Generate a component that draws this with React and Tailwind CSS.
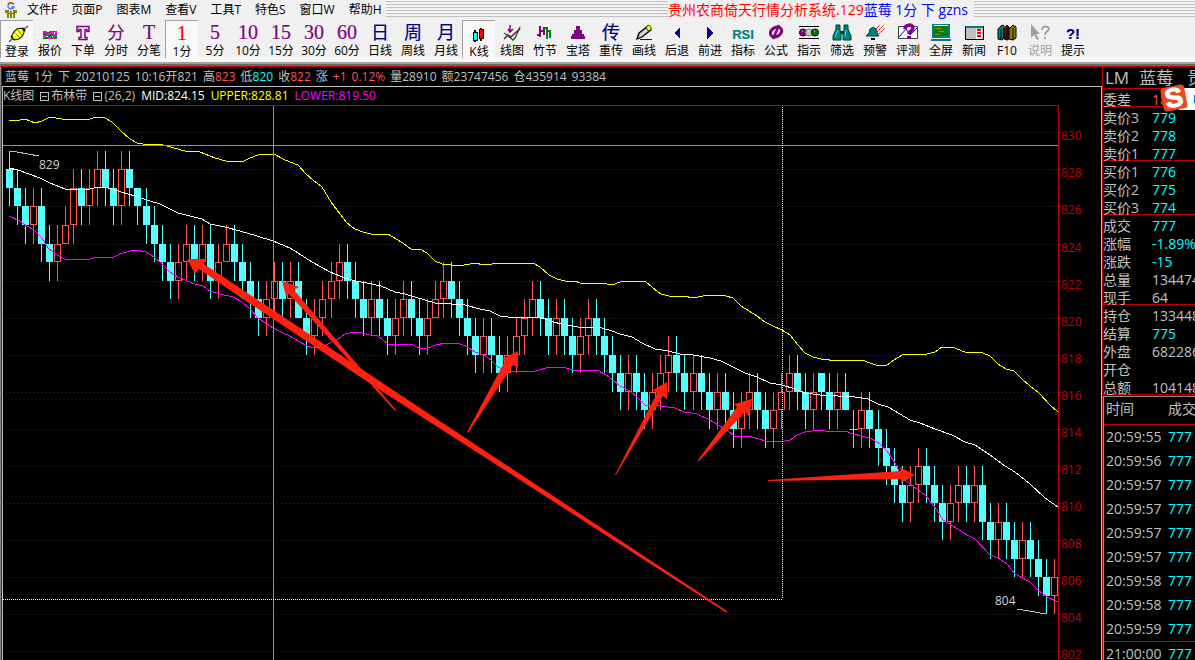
const PURPLE = "#800080";
const NAVY = "#000080";
const TEAL = "#008080";

const menus = ["文件F", "页面P", "图表M", "查看V", "工具T", "特色S", "窗口W", "帮助H"];

const Glyph = ({ children, color, serif = true, size = 20 }) => (
  <svg viewBox="0 0 24 18" className="w-6 h-[18px] overflow-visible">
    <text
      x="12"
      y="15"
      textAnchor="middle"
      fill={color}
      fontSize={size}
      fontFamily={serif ? "'Liberation Serif', 'Noto Sans CJK SC', serif" : "'Liberation Sans', sans-serif"}
      stroke={color}
      strokeWidth="0.2"
      fontWeight={serif ? 400 : 700}
    >
      {children}
    </text>
  </svg>
);

const Pic = ({ children, crisp }) => (
  <svg
    viewBox="0 0 24 18"
    className="w-6 h-[18px] overflow-visible"
    fill="none"
    shapeRendering={crisp ? "crispEdges" : "auto"}
  >
    {children}
  </svg>
);

const icons = {
  plug: (
    <Pic>
      <path d="M4 17l4-4M18 5l5-4" stroke="#808080" strokeWidth="2" />
      <path d="M17 3l3 3M6 11l4 4" stroke="#000" strokeWidth="2" />
      <ellipse cx="13" cy="9" rx="7" ry="4.5" transform="rotate(-42 13 9)" fill="#ff0" stroke="#000" />
      <path d="M9 7l6 6M12 4l5 6" stroke="#808000" />
      <path d="M10 10l3-4" stroke="#fff" />
    </Pic>
  ),
  quote: (
    <Pic crisp>
      <path fill="#008000" d="M5 7h14v8H5z" />
      <path fill="#f0f" d="M5 11h3v3H5zM6 7h3v2H6zM9 9h3v2H9zM10 13h4v2h-4zM12 7h3v3h-3zM15 10h4v2h-4zM17 7h2v2h-2zM15 13h2v2h-2z" />
      <path fill="#fff" d="M9 7h2v1H9zM8 12h2v1H8zM14 12h1v1h-1zM16 8h1v2h-1z" />
    </Pic>
  ),
  order: (
    <Pic>
      <path
        d="M6 2.500h12v5h-2v-2h-2v8h2v2H8v-2h2v-8H8v2H6z"
        stroke={PURPLE}
        strokeWidth="1.500"
        fill="#f0f0f0"
      />
    </Pic>
  ),
  candles: (
    <Pic crisp>
      <path d="M8 5v12M14 3v13" stroke="#000" strokeWidth="2" />
      <path d="M6 7h4v8H6z" fill="#0ff" stroke="#000" strokeWidth="1" />
      <path d="M12 4h4v9h-4z" fill="#f00" stroke="#000" strokeWidth="1" />
    </Pic>
  ),
  lines: (
    <Pic>
      <path d="M4 9l3 2 6 5 2-2 5-11" stroke="#008000" strokeWidth="1.500" />
      <path d="M4 15l4-4 3 2 4-4 5-4" stroke={PURPLE} strokeWidth="1.500" />
      <path d="M10 1v6M8 5l2 3 3-3" stroke={PURPLE} strokeWidth="1.500" />
    </Pic>
  ),
  bamboo: (
    <Pic crisp>
      <path d="M7 2v11M4 11h3M7 7h4M11 3v8" stroke={PURPLE} strokeWidth="2" />
      <path d="M14 3v12M11 4h3M14 7h4M17 7v7" stroke="#008000" strokeWidth="2" />
    </Pic>
  ),
  tower: (
    <Pic crisp>
      <path fill={PURPLE} d="M10 2h4v4h2v4h2v2h1v3H5v-3h1v-2h2V6h2z" />
    </Pic>
  ),
  pencil: (
    <Pic>
      <path d="M8 15.500h12" stroke="#00f" />
      <path d="M7 9l9-7 3 4-9 7-5 2z" fill="#c0c0c0" stroke="#000" strokeWidth="1.300" />
      <path d="M14 3l3-2 2 2v3l-3 1z" fill="#ff0" stroke="#000" strokeWidth="0.700" />
      <path d="M8 12l7-6" stroke="#fff" />
    </Pic>
  ),
  back: (
    <Pic crisp>
      <path fill={NAVY} d="M15 3v12L9 9z" />
    </Pic>
  ),
  forward: (
    <Pic crisp>
      <path fill={NAVY} d="M9 3v12l6-6z" />
    </Pic>
  ),
  formula: (
    <Pic>
      <ellipse cx="12" cy="8" rx="6" ry="4.500" transform="rotate(-30 12 8)" stroke={PURPLE} strokeWidth="3" />
      <path d="M15 1L9 15" stroke={PURPLE} strokeWidth="2.500" />
    </Pic>
  ),
  lights: (
    <Pic>
      <path d="M2 2.500h20M2 14.500h20" stroke="#000" />
      <circle cx="6" cy="8.500" r="3.500" fill={PURPLE} stroke="#000" />
      <circle cx="12" cy="8.500" r="3.500" fill="#c0c0c0" stroke="#808080" />
      <circle cx="18" cy="8.500" r="3.500" fill="#008000" stroke="#000" />
      <path d="M5 7h1M11 7h1M17 7h1" stroke="#fff" />
    </Pic>
  ),
  binoculars: (
    <Pic>
      <path d="M6 1h4v5l1 2v8H3v-4l3-7zM14 1h4v4l3 7v4h-8V8l1-2z" fill={TEAL} stroke="#003c3c" />
      <path d="M10 7h4v3h-4z" fill="#003c3c" />
      <path d="M5 13l3-7M15 13l1-7" stroke="#0ff" />
    </Pic>
  ),
  bell: (
    <Pic>
      <path d="M3 12l3-3 1-4 3-2 3 2 1 4 2 3z" fill={TEAL} stroke="#004040" />
      <path d="M8 14h4v2H8z" fill="#000" />
      <path d="M13 5l4-4M14 8l7-7M16 10l6-6" stroke="#f00" strokeDasharray="2 0.500" />
    </Pic>
  ),
  review: (
    <Pic>
      <path d="M2.500 2.500h19v12h-19z" fill="#fff" stroke="#404040" />
      <path d="M3 13l7-8 4 6 7-7" stroke="#00f" />
      <path d="M9 5c0-5 8-5 8-1 0 3-4 3-4 6" stroke={PURPLE} strokeWidth="3.500" />
      <path d="M11 12h4v3h-4z" fill={PURPLE} />
    </Pic>
  ),
  screen: (
    <Pic crisp>
      <path d="M4 1h16v12H4z" fill="#008000" stroke={TEAL} strokeWidth="2" />
      <path d="M5 1.500h14" stroke="#fff" />
      <path d="M6 4.500h6M9 7.500h6M6 10.500h5" stroke="#c08000" />
      <path d="M2 15.500h20" stroke={TEAL} strokeWidth="2" />
    </Pic>
  ),
  news: (
    <Pic crisp>
      <path d="M3 2h18v13H3z" fill="#c0c0c0" stroke="#000" />
      <path d="M4 2h17v2H4z" fill={TEAL} />
      <path d="M14 5h6v10h-6z" fill="#fff" />
      <path d="M15 6h4M15 9h4M15 12h4" stroke="#f00" strokeWidth="2" />
    </Pic>
  ),
  books: (
    <Pic>
      <path d="M3 5l4-4 2 1v12l-2 2-4-1z" fill={TEAL} stroke="#000" />
      <path d="M9 5l3-4 2 2v12l-2 1-3-1z" fill="#800000" stroke="#000" />
      <path d="M14 5l4-4 3 2v11l-3 2-4-1z" fill="#808000" stroke="#000" />
      <path d="M6 5v11M12 4v12M18 4v12" stroke="#000" />
    </Pic>
  ),
  help: (
    <Pic>
      <path fill="#a0a0a0" d="M3 0v14l3-3 3 5 2-1-3-5h4z" />
      <path d="M14 6c0-5 7-4 7-1 0 2-4 2-4 6M17 13v2" stroke="#fff" strokeWidth="3" />
      <path d="M14 6c0-5 7-4 7-1 0 2-4 2-4 6M17 13v2" stroke="#a0a0a0" strokeWidth="2" />
    </Pic>
  ),
};

const tools = [
  { label: "登录", icon: icons.plug, active: true },
  { label: "报价", icon: icons.quote },
  { label: "下单", icon: icons.order },
  { label: "分时", icon: <Glyph color={PURPLE} size={17}>分</Glyph> },
  { label: "分笔", icon: <Glyph color={PURPLE}>T</Glyph> },
  { label: "1分", icon: <Glyph color="#ff0000">1</Glyph>, active: true },
  { label: "5分", icon: <Glyph color={PURPLE}>5</Glyph> },
  { label: "10分", icon: <Glyph color={PURPLE}>10</Glyph> },
  { label: "15分", icon: <Glyph color={PURPLE}>15</Glyph> },
  { label: "30分", icon: <Glyph color={PURPLE}>30</Glyph> },
  { label: "60分", icon: <Glyph color={PURPLE}>60</Glyph> },
  { label: "日线", icon: <Glyph color={NAVY} size={18}>日</Glyph> },
  { label: "周线", icon: <Glyph color={NAVY} size={18}>周</Glyph> },
  { label: "月线", icon: <Glyph color={NAVY} size={18}>月</Glyph> },
  { label: "K线", icon: icons.candles, active: true },
  { label: "线图", icon: icons.lines },
  { label: "竹节", icon: icons.bamboo },
  { label: "宝塔", icon: icons.tower },
  { label: "重传", icon: <Glyph color={NAVY} size={18}>传</Glyph> },
  { label: "画线", icon: icons.pencil },
  { label: "后退", icon: icons.back },
  { label: "前进", icon: icons.forward },
  { label: "指标", icon: <Glyph color={TEAL} serif={false} size={13}>RSI</Glyph> },
  { label: "公式", icon: icons.formula },
  { label: "指示", icon: icons.lights },
  { label: "筛选", icon: icons.binoculars },
  { label: "预警", icon: icons.bell },
  { label: "评测", icon: icons.review },
  { label: "全屏", icon: icons.screen },
  { label: "新闻", icon: icons.news },
  { label: "F10", icon: icons.books },
  { label: "说明", icon: icons.help, disabled: true },
  { label: "提示", icon: <Glyph color={NAVY} serif={false} size={15}>?!</Glyph> },
];

// label, value, tone of the value
const status = [
  ["蓝莓"],
  ["1分"],
  ["下"],
  ["20210125"],
  ["10:16开821"],
  ["高", "823", "r"],
  ["低", "820", "c"],
  ["收", "822", "r"],
  ["涨"],
  ["", "+1", "r"],
  ["", "0.12%", "r"],
  ["量28910"],
  ["额23747456"],
  ["仓435914"],
  ["93384"],
];

const tones = {
  g: "text-[#c0c0c0]",
  r: "text-[#ff5050]",
  c: "text-[#00ffff]",
};

// direction, top of body, then (only if not 1) body size, upper wick, lower wick
const candles = [
  ["d", 828], ["d", 827], ["d", 826], ["u", 826], ["d", 826, 2], ["d", 824], ["u", 824],
  ["u", 825, 1, 1, 0], ["u", 827, 2], ["d", 827], ["u", 827], ["u", 828], ["d", 828],
  ["d", 827], ["u", 828, 2], ["d", 828], ["d", 827, 1, 0, 1], ["d", 826], ["d", 825],
  ["d", 824], ["d", 823], ["u", 823], ["u", 824], ["d", 824], ["u", 824], ["d", 824, 2],
  ["u", 823], ["u", 824, 1, 1, 0], ["d", 824], ["d", 823], ["d", 822], ["d", 821], ["u", 821],
  ["u", 822], ["d", 822], ["u", 822], ["d", 822, 2, 1, 0], ["d", 820], ["u", 820], ["u", 821],
  ["u", 822], ["u", 823], ["d", 823], ["d", 822], ["d", 821], ["u", 821], ["d", 821],
  ["d", 820], ["u", 820], ["u", 821], ["d", 821], ["d", 820], ["u", 820], ["u", 821, 1, 1, 0],
  ["u", 822], ["d", 822], ["d", 821], ["d", 820], ["d", 819], ["u", 819], ["d", 819],
  ["d", 818], ["u", 818], ["u", 819], ["u", 820], ["u", 821], ["d", 821], ["d", 820],
  ["u", 820], ["d", 820], ["d", 819], ["u", 819], ["u", 820], ["d", 820], ["d", 819],
  ["d", 818], ["d", 817], ["u", 817], ["d", 817], ["d", 816], ["u", 816], ["u", 817],
  ["u", 818], ["d", 818], ["d", 817], ["u", 817], ["d", 817], ["d", 816], ["u", 816],
  ["d", 816], ["d", 815], ["u", 815], ["u", 816], ["d", 816], ["d", 815], ["u", 815],
  ["u", 816], ["u", 817], ["d", 817], ["d", 816], ["u", 816], ["d", 817, 1, 0, 1], ["d", 816],
  ["u", 816], ["d", 816, 1, 1, 0], ["x", 814, 0, 1, 1], ["u", 815], ["d", 815], ["d", 814],
  ["d", 813], ["d", 812], ["d", 811], ["u", 811], ["u", 812], ["d", 812], ["d", 811],
  ["d", 810], ["u", 810], ["u", 811], ["d", 811], ["u", 811], ["d", 811, 2], ["d", 809],
  ["u", 809], ["d", 809], ["d", 808], ["u", 808], ["d", 808], ["d", 807], ["d", 806], ["u", 806],
];

const upper =
  "9,120 20,120 25,119 30,121 35,123 42,121 50,117 62,119 90,119 96,117 105,118 112,122 121,131 130,139 137,143 143,144 158,144 167,146 185,151 200,152 215,158 226,161 235,161 242,162 250,158 258,155 265,154 274,154 283,159 290,162 298,165 306,174 313,180 322,187 331,202 340,214 347,223 355,229 363,232 371,234 388,234 396,239 403,243 411,249 420,249 427,253 435,261 442,264 451,265 459,266 475,263 484,265 492,264 505,263 533,263 540,267 549,275 557,279 565,281 575,281 580,283 602,283 612,285 620,282 645,281 653,288 661,294 669,296 677,297 684,296 693,298 703,296 716,295 726,296 733,298 741,306 749,311 757,316 765,322 773,326 782,330 790,335 798,345 805,353 813,357 821,359 838,361 862,360 870,363 879,366 887,365 894,360 902,355 912,354 927,354 935,352 942,347 952,347 965,352 983,353 990,356 998,364 1006,369 1014,371 1022,379 1030,386 1039,393 1050,405 1058,412";

const mid =
  "9,168 18,170 40,178 50,183 65,189 90,189 98,187 108,188 121,192 135,196 150,201 160,204 170,209 178,213 190,216 202,219 210,224 225,227 240,231 257,236 273,241 290,248 298,253 312,262 330,272 345,278 355,281 367,283 381,286 395,292 405,294 415,297 425,300 435,303 452,304 465,305 480,309 490,311 500,316 508,317 535,317 545,319 553,322 562,324 578,327 602,328 612,331 620,334 632,337 642,343 655,349 668,351 680,354 693,355 710,358 721,361 733,367 745,373 757,377 770,383 782,385 795,389 805,393 820,395 838,396 855,397 868,399 878,404 888,407 900,414 910,420 920,423 935,429 952,435 965,442 975,445 990,455 1005,466 1015,472 1030,484 1045,498 1058,507";

const lower =
  "9,216 20,221 27,226 34,230 42,238 48,248 57,255 65,259 90,259 98,257 112,258 120,254 130,251 137,250 146,252 154,257 162,264 170,272 178,277 187,281 195,284 203,286 210,291 220,294 233,297 242,302 250,309 258,318 264,322 273,328 283,333 290,336 298,341 307,346 315,348 323,347 330,343 338,339 345,334 353,332 362,333 370,335 378,336 383,340 388,344 405,345 411,344 419,348 428,348 436,345 445,343 460,344 466,346 475,352 484,355 491,360 498,367 505,371 520,371 535,371 550,367 563,367 573,370 597,370 606,375 613,380 620,386 630,391 637,397 645,405 660,406 675,408 684,412 697,414 708,419 720,426 728,431 734,436 752,437 766,441 780,442 790,440 797,435 805,432 812,431 820,430 830,432 845,431 853,434 862,436 872,439 880,444 887,451 895,463 903,479 913,486 926,496 937,510 943,520 953,526 967,535 975,539 990,555 998,558 1007,564 1015,574 1030,582 1038,590 1047,597 1058,602";

const arrows = [
  "187,259 206,259 204,264 240,288 393,390 727,611 727,613 380,390 240,297 199,269 195,274",
  "282,281 299,287 294,290 396,410 395,411 289,294 286,296",
  "518,351 518,368 513,365 468,433 467,432 505,361 502,359",
  "667,382 667,399 663,396 616,475 615,475 657,393 653,390",
  "752,399 749,416 745,412 699,461 698,460 737,407 734,404",
  "915,475 901,483 901,479 768,481 768,480 901,471 900,467",
];

const levels = [830, 828, 826, 824, 822, 820, 818, 816, 814, 812, 810, 808, 806, 804, 802];

const yOf = (price) => Math.floor(169.9 + (828 - price) * 18.54);
// every 23rd bar or so is one pixel wider
const xOf = (i) => 9 + i * 8 + Math.floor((i + 6) / 22.75);

const Candle = ({ i, data }) => {
  const [dir, top, size = 1, up = 1, down = 1] = data;
  const x = xOf(i);
  const y1 = yOf(top);
  const y2 = yOf(top - size);
  const high = yOf(top + up);
  const low = yOf(top - size - down);

  if (dir === "x") {
    return <path d={`M${x + 0.5} ${high}V${low}M${x - 3} ${y1 + 0.5}h8`} stroke="#c0c0c0" />;
  }
  if (dir === "d") {
    return (
      <g fill="#54ffff">
        <rect x={x} y={high} width="1" height={low - high} />
        <rect x={x - 3} y={y1} width="7" height={y2 - y1} />
      </g>
    );
  }
  return (
    <g stroke="#ff5454" fill="none">
      <path d={`M${x + 0.5} ${high}V${y1}M${x + 0.5} ${y2}V${low}`} />
      <rect x={x - 2.5} y={y1 + 0.5} width="6" height={y2 - y1 - 1} />
    </g>
  );
};

const Chart = () => (
  <svg
    viewBox="3 105 1098 555"
    preserveAspectRatio="xMinYMin slice"
    className="block w-full flex-1 min-h-0"
    fontFamily="'Open Sans', 'Noto Sans', sans-serif"
    fontSize="12"
  >
    <g shapeRendering="crispEdges" fill="none">
      {levels.map((l) => (
        <path key={l} d={`M5 ${yOf(l) + 0.5}H1058`} stroke="#a00000" strokeDasharray="1 3" />
      ))}
      {candles.map((c, i) => (
        <Candle key={i} i={i} data={c} />
      ))}
      <polyline points={upper} stroke="#ffff00" />
      <polyline points={mid} stroke="#ffffff" />
      <polyline points={lower} stroke="#ff00ff" />
      <path d="M9 151l8 1 22 4M1017 609l12 2 17 3" stroke="#c0c0c0" />
      <path d="M3 145.500H1058M273.500 105V660" stroke="#909090" />
      <path d="M782.500 105V599M3 599.500H783" stroke="#ffffff" strokeDasharray="1 1" />
      <path d="M3 105.500H1058.500V660" stroke="#c00000" />
      {levels.map((l) => (
        <path key={l} d={`M1058 ${yOf(l) + 0.5}h3`} stroke="#c00000" />
      ))}
    </g>
    {levels.map((l) => (
      <text key={l} x="1061" y={yOf(l) + 8} fill="#c00000">{l}</text>
    ))}
    <text x="39" y="169" fill="#d0d0d0">829</text>
    <text x="995" y="605" fill="#d0d0d0">804</text>
    {arrows.map((a) => (
      <polygon key={a} points={a} fill="#ff2010" />
    ))}
  </svg>
);

const quotes = [
  { name: "委差", value: "18", tone: "r", line: true },
  { name: "卖价3", value: "779", tone: "c" },
  { name: "卖价2", value: "778", tone: "c" },
  { name: "卖价1", value: "777", tone: "c", line: true },
  { name: "买价1", value: "776", tone: "c" },
  { name: "买价2", value: "775", tone: "c" },
  { name: "买价3", value: "774", tone: "c", line: true },
  { name: "成交", value: "777", tone: "c" },
  { name: "涨幅", value: "-1.89%", tone: "c" },
  { name: "涨跌", value: "-15", tone: "c" },
  { name: "总量", value: "134474", tone: "g" },
  { name: "现手", value: "64", tone: "g", line: true },
  { name: "持仓", value: "133448", tone: "g" },
  { name: "结算", value: "775", tone: "c" },
  { name: "外盘", value: "682286", tone: "g" },
  { name: "开仓", value: "", tone: "g" },
  { name: "总额", value: "104148", tone: "g", line: true },
];

const ticks = [
  "20:59:55", "20:59:56", "20:59:57", "20:59:57", "20:59:57",
  "20:59:57", "20:59:58", "20:59:58", "20:59:59", "21:00:00",
];

const Grip = ({ className }) => (
  <div
    className={
      "h-[18px] self-start bg-[repeating-linear-gradient(#f8f8f8_0_1px,#c0c0c0_1px_2px,#f0f0f0_2px_3px)] " + className
    }
  />
);

const MenuBar = () => (
  <div className="flex h-5 items-center text-xs leading-4 text-black">
    <svg viewBox="0 0 14 16" className="ml-1 h-4 w-3.5 shrink-0" fill="none">
      <path d="M10 2C7 0 4 1 4 4s4 4 6 1H7" stroke="#4080ff" strokeWidth="1.500" />
      <path d="M4 2c2-2 4-1 6 0" stroke="#f03020" strokeWidth="1.500" />
      <path d="M1 8h4v3h4V8h4v3h-2v5h-2v-4H5v4H3v-5H1z" fill="#908000" />
      <path d="M7 9v7" stroke="#908000" strokeWidth="2" />
    </svg>
    <nav className="ml-[9px] flex shrink-0 gap-3.5 pr-1">
      {menus.map((m) => (
        <button key={m} type="button" className="whitespace-nowrap">{m}</button>
      ))}
    </nav>
    <Grip className="flex-1" />
    <h1 className="shrink-0 whitespace-nowrap pr-1.5 text-sm leading-4 text-[#ff0000]">
      贵州农商倚天行情分析系统.129<span className="text-[#0000ff]">蓝莓 1分 下 gzns</span>
    </h1>
    <Grip className="w-[221px] shrink-0" />
  </div>
);

const ToolBar = () => (
  <div className="flex h-[42px] border-b-4 border-[#f8f8f8]">
    {tools.map((t) => (
      <button
        key={t.label}
        type="button"
        disabled={t.disabled}
        className={
          "flex w-[33px] shrink-0 flex-col items-center border-l border-t text-xs leading-4 whitespace-nowrap " +
          (t.active
            ? "border-[#a0a0a0] bg-[#f8f8f8] pt-1 "
            : "border-transparent pt-[3px] ") +
          (t.disabled ? "text-[#a0a0a0]" : "text-black")
        }
      >
        {t.icon}
        <span className="mt-px">{t.label}</span>
      </button>
    ))}
  </div>
);

const Fold = () => (
  <button
    type="button"
    aria-label="collapse"
    className="mr-0.5 flex size-[9px] items-center justify-center border border-[#c0c0c0]"
  >
    <span className="h-px w-[5px] bg-[#c0c0c0]" />
  </button>
);

const SidePanel = () => (
  <aside className="relative w-[93px] shrink-0 overflow-hidden border-l border-[#c00000] text-sm text-[#c0c0c0]">
    <div className="flex h-[22px] items-center gap-2.5 whitespace-nowrap border-b border-[#c00000] pl-0.5 text-[17px] leading-5">
      <span>LM</span>
      <span>蓝莓</span>
      <span className="ml-1">贵</span>
    </div>
    <table className="w-full table-fixed border-separate border-spacing-0 whitespace-nowrap">
      <tbody>
        {quotes.map((q) => (
          <tr key={q.name} className="h-[18px] leading-3">
            <th
              scope="row"
              className={"w-[49px] border-b p-0 pt-[5px] text-left font-normal " + (q.line ? "border-[#c00000]" : "border-transparent")}
            >
              {q.name}
            </th>
            <td className={"border-b p-0 pt-[5px] " + tones[q.tone] + (q.line ? " border-[#c00000]" : " border-transparent")}>
              {q.value}
            </td>
          </tr>
        ))}
      </tbody>
    </table>
    <table className="mt-px w-full table-fixed border-separate border-spacing-0 border-l border-t border-[#909090] whitespace-nowrap">
      <thead>
        <tr className="h-7 leading-5">
          <th className="w-[64px] border-b border-[#c00000] p-0 pb-[3px] pl-0.5 text-left font-normal">时间</th>
          <th className="border-b border-[#c00000] p-0 pb-[3px] text-left font-normal">成交</th>
        </tr>
      </thead>
      <tbody>
        {ticks.map((t, i) => (
          <tr key={i} className="h-6 leading-5">
            <td className={"p-0 pl-0.5 " + (i === 9 ? "border-t border-[#c00000]" : "")}>{t}</td>
            <td className={"p-0 text-[#00ffff] " + (i === 9 ? "border-t border-[#c00000]" : "")}>777</td>
          </tr>
        ))}
      </tbody>
    </table>
    <div className="absolute right-0 top-[21px] flex h-[22px] w-4 items-center justify-end bg-white">
      <span className="h-2 w-px bg-[#0078d7]" />
    </div>
    <svg viewBox="0 0 28 28" className="absolute right-[7px] top-[17px] size-7">
      <g transform="rotate(-11 14 14)">
        <rect x="2" y="2" width="24" height="24" rx="3" fill="#f0481c" />
        <text
          x="14"
          y="23"
          textAnchor="middle"
          fill="#fff"
          stroke="#fff"
          fontFamily="'Liberation Sans', sans-serif"
          fontWeight="700"
          fontSize="27"
        >
          S
        </text>
      </g>
    </svg>
  </aside>
);

const App = () => {
  return (
    <div className="flex h-screen flex-col overflow-hidden bg-[#f0f0f0] font-['Open_Sans','Noto_Sans_CJK_SC',sans-serif]">
      <MenuBar />
      <ToolBar />
      <div className="h-1 shrink-0 border-b-2 border-t-2 border-b-[#696969] border-t-[#a0a0a0]" />
      <main className="flex min-h-0 flex-1 border-l border-t border-l-[#808080] border-t-[#c00000] bg-black">
        <section className="flex min-w-0 flex-1 flex-col border-l border-[#c00000] text-xs">
          <div className="flex h-[19px] shrink-0 items-center gap-[5px] whitespace-nowrap pl-[3px] text-[#c0c0c0]">
            {status.map(([label, value, tone]) => (
              <span key={label + value}>
                {label}
                {value && <span className={tones[tone]}>{value}</span>}
              </span>
            ))}
          </div>
          <div className="flex min-h-0 flex-1 flex-col border-l border-r border-t border-[#c0c0c0]">
            <div className="flex h-[18px] shrink-0 items-center whitespace-nowrap text-[#c0c0c0]">
              <span className="mr-1.5">K线图</span>
              <Fold />
              <span className="mr-1.5">布林带</span>
              <Fold />
              <span className="mr-1.5">(26,2)</span>
              <span className="mr-1.5 text-white">MID:824.15</span>
              <span className="mr-1.5 text-[#ffff00]">UPPER:828.81</span>
              <span className="text-[#ff00ff]">LOWER:819.50</span>
            </div>
            <Chart />
          </div>
        </section>
        <SidePanel />
      </main>
    </div>
  );
};

export default App;
